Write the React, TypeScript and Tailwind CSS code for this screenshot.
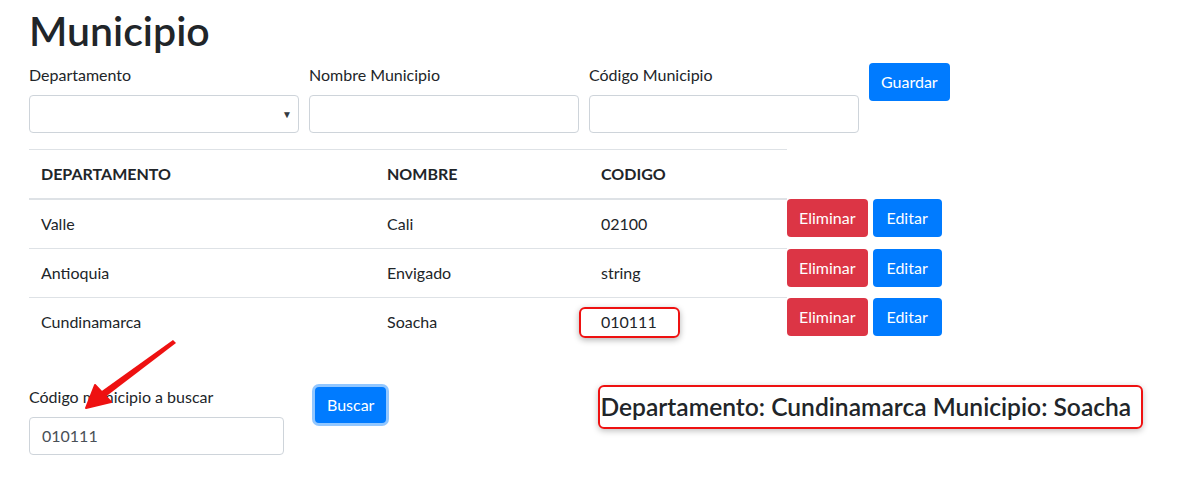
import type { ReactNode } from "react";

const font = { fontFamily: '"Segoe UI", Lato, sans-serif' };

const rows = [
  { dep: "Valle", name: "Cali", code: "02100" },
  { dep: "Antioquia", name: "Envigado", code: "string" },
  { dep: "Cundinamarca", name: "Soacha", code: "010111" },
];

function Field({ label, children }: { label: string; children: ReactNode }) {
  return (
    <div className="flex w-[270px] flex-col">
      <label className="mb-2 text-base leading-6">{label}</label>
      {children}
    </div>
  );
}

export default function App() {
  return (
    <main className="relative min-h-[485px] bg-white text-[#212529]" style={font}>
      <div className="pl-[29px] pt-[7px]">
        <h1 className="mb-2 text-[41px] font-semibold leading-[48px]">Municipio</h1>

        <div className="flex items-start gap-[10px]">
          <Field label="Departamento">
            <div className="relative h-[38px] rounded border border-[#ced4da]">
              <span className="absolute right-[6px] top-[11px] text-[10px] text-[#343a40]">▼</span>
            </div>
          </Field>
          <Field label="Nombre Municipio">
            <div className="h-[38px] rounded border border-[#ced4da]" />
          </Field>
          <Field label="Código Municipio">
            <div className="h-[38px] rounded border border-[#ced4da]" />
          </Field>
          <button className="h-[38px] rounded bg-[#007bff] px-3 text-base text-white">Guardar</button>
        </div>

        <table className="mt-4 border-collapse text-base">
          <thead>
            <tr>
              <th className="w-[346px] border-t border-b-2 border-[#dee2e6] px-3 py-3 text-left font-bold uppercase leading-6">Departamento</th>
              <th className="w-[214px] border-t border-b-2 border-[#dee2e6] px-3 py-3 text-left font-bold uppercase leading-6">Nombre</th>
              <th className="w-[198px] border-t border-b-2 border-[#dee2e6] px-3 py-3 text-left font-bold uppercase leading-6">Codigo</th>
              <th className="p-0" />
            </tr>
          </thead>
          <tbody>
            {rows.map((r) => (
              <tr key={r.code}>
                <td className="border-t border-[#dee2e6] px-3 py-3 leading-6">{r.dep}</td>
                <td className="border-t border-[#dee2e6] px-3 py-3 leading-6">{r.name}</td>
                <td className="border-t border-[#dee2e6] px-3 py-3 leading-6">{r.code}</td>
                <td className="p-0 align-top">
                  <div className="flex gap-[5px]">
                    <button className="h-[38px] rounded bg-[#dc3545] px-3 text-base text-white">Eliminar</button>
                    <button className="h-[38px] rounded bg-[#007bff] px-[14px] text-base text-white">Editar</button>
                  </div>
                </td>
              </tr>
            ))}
          </tbody>
        </table>

        <div className="mt-[39px] flex items-start">
          <div className="flex w-[255px] flex-col">
            <label className="mb-2 text-base leading-6">Código municipio a buscar</label>
            <div className="flex h-[38px] items-center rounded border border-[#ced4da] px-3 text-[#495057]">010111</div>
          </div>
          <button className="ml-[31px] mt-[2px] h-[36px] rounded bg-[#007bff] px-3 text-base text-white shadow-[0_0_0_3px_rgba(38,143,255,0.5)]">
            Buscar
          </button>
          <div className="ml-[212px] flex h-[44px] w-[545px] items-center rounded-md border-2 border-[#ee1111] shadow-[0_2px_6px_rgba(0,0,0,0.25)]">
            <h4 className="whitespace-nowrap text-[24.6px] font-semibold leading-7">Departamento: Cundinamarca Municipio: Soacha</h4>
          </div>
        </div>
      </div>

      {/* annotation around the matching code */}
      <div className="absolute left-[579px] top-[307px] h-[31px] w-[101px] rounded-md border-2 border-[#ee1111] shadow-[0_2px_6px_rgba(0,0,0,0.3)]" />

      <svg className="absolute left-0 top-0" width="200" height="420" viewBox="0 0 200 420">
        <polygon points="173,340 176,343 104,398 99,393" fill="#ee1111" />
        <polygon points="86,408 95,385 111,402" fill="#ee1111" stroke="#ee1111" strokeWidth="2" strokeLinejoin="round" />
      </svg>
    </main>
  );
}
